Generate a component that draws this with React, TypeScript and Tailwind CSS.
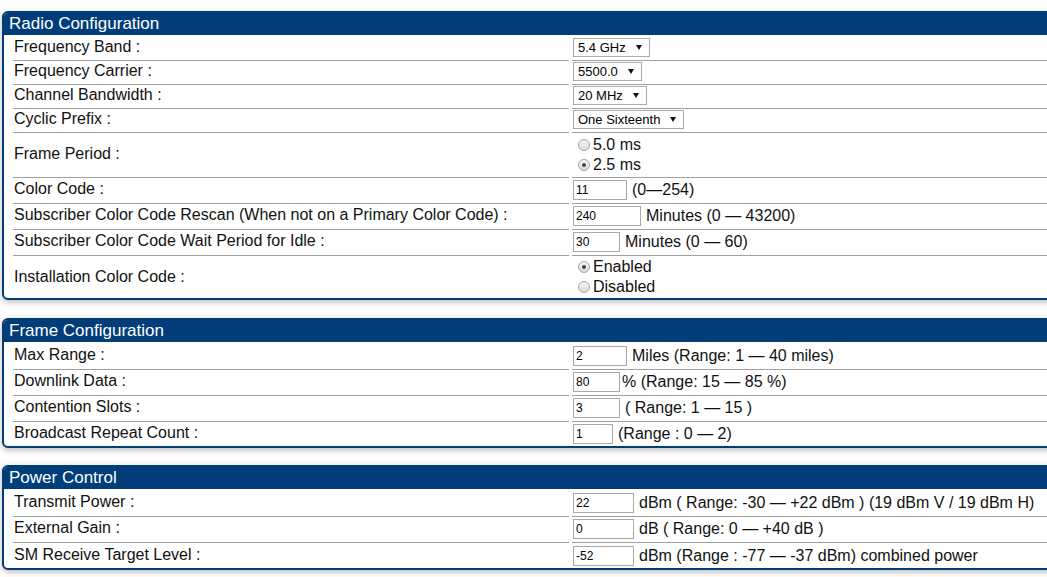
import React from "react";

const BORDER_ROW = "border-b border-[#a0a0a0]";

function Row({
  label,
  children,
  h,
  last,
  lp = "pb-[4px]",
  cp = "pb-[2px]",
}: {
  label: string;
  children?: React.ReactNode;
  h: string;
  last?: boolean;
  lp?: string;
  cp?: string;
}) {
  const line = last ? "" : BORDER_ROW;
  return (
    <div className="flex gap-[3px]">
      <div className={`w-[556px] shrink-0 flex items-center pl-[1px] ${lp} ${line} ${h}`}>{label}</div>
      <div className={`flex-1 flex items-center pl-[1px] ${cp} ${line} ${h}`}>{children}</div>
    </div>
  );
}

function Select({ value }: { value: string }) {
  return (
    <div className="inline-flex items-center h-[19px] border border-[#a9a9a9] bg-white pl-[4px] pr-[7px] text-[13px] leading-none text-black">
      <span>{value}</span>
      <svg className="ml-[10px]" width="6" height="5" viewBox="0 0 6 5">
        <polygon points="0,0 6,0 3,5" fill="#111" />
      </svg>
    </div>
  );
}

function Input({ value, w }: { value: string; w: string }) {
  return (
    <div className={`h-[20px] border border-[#a9a9a9] bg-white flex items-center pl-[2px] text-[12px] leading-none text-black ${w}`}>
      {value}
    </div>
  );
}

function Radio({ checked, label }: { checked?: boolean; label: string }) {
  return (
    <div className="flex items-center h-[20px]">
      <div className="ml-[5px] mr-[3px] w-[12px] h-[12px] rounded-full border border-[#a3a3a3] bg-gradient-to-b from-[#f7f7f7] to-[#dadada] flex items-center justify-center">
        {checked && <div className="w-[4px] h-[4px] rounded-full bg-[#444]" />}
      </div>
      <span>{label}</span>
    </div>
  );
}

function InputWithText({
  value,
  w,
  text,
  gap = "ml-[5px]",
}: {
  value: string;
  w: string;
  text: string;
  gap?: string;
}) {
  return (
    <div className="flex items-center">
      <Input value={value} w={w} />
      <span className={gap}>{text}</span>
    </div>
  );
}

function Panel({ title, children }: { title: string; children: React.ReactNode }) {
  return (
    <div className="w-[1090px] border-2 border-[#003d79] rounded-[6px] bg-white shadow-[0_2px_6px_rgba(0,0,0,0.28)] overflow-hidden">
      <div className="h-[22px] bg-[#003d79] text-white text-[17px] leading-[22px] pl-[5px]">{title}</div>
      <div className="pl-[9px] pt-[2px]">{children}</div>
    </div>
  );
}

export default function App() {
  return (
    <div className="w-[1047px] h-[577px] overflow-hidden bg-white pt-[11px] pl-[2px] font-['Liberation_Sans',Arial,sans-serif] text-[16px] leading-none text-[#111]">
      <Panel title="Radio Configuration">
        <Row label="Frequency Band :" h="h-[24px]">
          <Select value="5.4 GHz" />
        </Row>
        <Row label="Frequency Carrier :" h="h-[24px]">
          <Select value="5500.0" />
        </Row>
        <Row label="Channel Bandwidth :" h="h-[24px]">
          <Select value="20 MHz" />
        </Row>
        <Row label="Cyclic Prefix :" h="h-[24px]">
          <Select value="One Sixteenth" />
        </Row>
        <Row label="Frame Period :" h="h-[45px]" lp="pb-[2px]" cp="pb-0">
          <div className="flex flex-col">
            <Radio label="5.0 ms" />
            <Radio label="2.5 ms" checked />
          </div>
        </Row>
        <Row label="Color Code :" h="h-[26px]">
          <InputWithText value="11" w="w-[54px]" text="(0—254)" />
        </Row>
        <Row label="Subscriber Color Code Rescan (When not on a Primary Color Code) :" h="h-[26px]">
          <InputWithText value="240" w="w-[68px]" text="Minutes (0 — 43200)" />
        </Row>
        <Row label="Subscriber Color Code Wait Period for Idle :" h="h-[26px]">
          <InputWithText value="30" w="w-[47px]" text="Minutes (0 — 60)" />
        </Row>
        <Row label="Installation Color Code :" h="h-[42px]" last lp="pb-0" cp="pb-0">
          <div className="flex flex-col">
            <Radio label="Enabled" checked />
            <Radio label="Disabled" />
          </div>
        </Row>
      </Panel>

      <div className="h-[18px]" />

      <Panel title="Frame Configuration">
        <Row label="Max Range :" h="h-[26px]">
          <InputWithText value="2" w="w-[54px]" text="Miles (Range: 1 — 40 miles)" />
        </Row>
        <Row label="Downlink Data :" h="h-[26px]">
          <InputWithText value="80" w="w-[47px]" text="% (Range: 15 — 85 %)" gap="ml-[2px]" />
        </Row>
        <Row label="Contention Slots :" h="h-[26px]">
          <InputWithText value="3" w="w-[47px]" text="( Range: 1 — 15 )" />
        </Row>
        <Row label="Broadcast Repeat Count :" h="h-[24px]" last lp="pb-[2px]" cp="pb-0">
          <InputWithText value="1" w="w-[40px]" text="(Range : 0 — 2)" />
        </Row>
      </Panel>

      <div className="h-[17px]" />

      <Panel title="Power Control">
        <Row label="Transmit Power :" h="h-[26px]">
          <InputWithText value="22" w="w-[61px]" text="dBm ( Range: -30 — +22 dBm ) (19 dBm V / 19 dBm H)" />
        </Row>
        <Row label="External Gain :" h="h-[26px]">
          <InputWithText value="0" w="w-[61px]" text="dB ( Range: 0 — +40 dB )" />
        </Row>
        <Row label="SM Receive Target Level :" h="h-[25px]" last lp="pb-[2px]" cp="pb-0">
          <InputWithText value="-52" w="w-[61px]" text="dBm (Range : -77 — -37 dBm) combined power" />
        </Row>
      </Panel>
    </div>
  );
}
